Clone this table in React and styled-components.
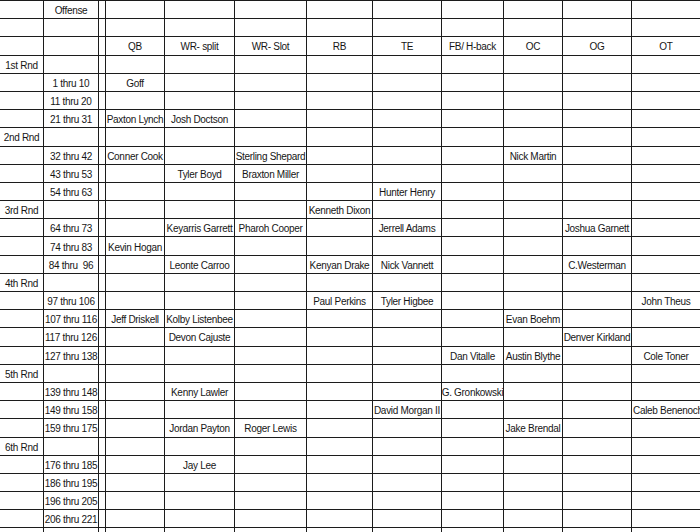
import React from "react";
import styled, { createGlobalStyle } from "styled-components";

const GlobalStyle = createGlobalStyle`
  html, body {
    margin: 0;
    padding: 0;
    background: #ffffff;
    overflow: hidden;
  }
  body {
    font-family: "Liberation Sans", Arial, sans-serif;
  }
`;

const COLUMNS = "44px 55px 7px 59px 70px 72px 66px 69px 62px 59px 69px 68px";

const Sheet = styled.div`
  width: 700px;
  height: 532px;
  overflow: hidden;
  border-top: 1px solid #1c1c1c;
  background: #fff;
`;

const Row = styled.div`
  display: grid;
  grid-template-columns: ${COLUMNS};
  height: 18.2px;
`;

const Cell = styled.div`
  box-sizing: border-box;
  display: flex;
  align-items: center;
  justify-content: ${(p) => (p.$align === "left" ? "flex-start" : "center")};
  padding-top: 2px;
  padding-left: ${(p) => (p.$align === "left" ? "1px" : "0")};
  border-bottom: 1px solid #1c1c1c;
  border-right: ${(p) => (p.$last ? "none" : "1px solid #1c1c1c")};
  font-size: 10px;
  letter-spacing: -0.3px;
  color: #161616;
  white-space: pre;
  overflow: hidden;
`;

// columns: 0 round, 1 pick range, 2 spacer, then positions
const POS = {
  QB: 3,
  WRS: 4,
  WRSL: 5,
  RB: 6,
  TE: 7,
  FB: 8,
  OC: 9,
  OG: 10,
  OT: 11,
};

const rows = [
  { 1: "Offense" },
  {},
  {
    3: "QB",
    4: "WR- split",
    5: "WR- Slot",
    6: "RB",
    7: "TE",
    8: "FB/ H-back",
    9: "OC",
    10: "OG",
    11: "OT",
  },
  { 0: "1st Rnd" },
  { 1: "1 thru 10", [POS.QB]: "Goff" },
  { 1: "11 thru 20" },
  { 1: "21 thru 31", [POS.QB]: "Paxton Lynch", [POS.WRS]: "Josh Doctson" },
  { 0: "2nd Rnd" },
  {
    1: "32 thru 42",
    [POS.QB]: "Conner Cook",
    [POS.WRSL]: "Sterling Shepard",
    [POS.OC]: "Nick Martin",
  },
  { 1: "43 thru 53", [POS.WRS]: "Tyler Boyd", [POS.WRSL]: "Braxton Miller" },
  { 1: "54 thru 63", [POS.TE]: "Hunter Henry" },
  { 0: "3rd Rnd", [POS.RB]: "Kenneth Dixon" },
  {
    1: "64 thru 73",
    [POS.WRS]: "Keyarris Garrett",
    [POS.WRSL]: "Pharoh Cooper",
    [POS.TE]: "Jerrell Adams",
    [POS.OG]: "Joshua Garnett",
  },
  { 1: "74 thru 83", [POS.QB]: "Kevin Hogan" },
  {
    1: "84 thru  96",
    [POS.WRS]: "Leonte Carroo",
    [POS.RB]: "Kenyan Drake",
    [POS.TE]: "Nick Vannett",
    [POS.OG]: "C.Westerman",
  },
  { 0: "4th Rnd" },
  {
    1: "97 thru 106",
    [POS.RB]: "Paul Perkins",
    [POS.TE]: "Tyler Higbee",
    [POS.OT]: "John Theus",
  },
  {
    1: "107 thru 116",
    [POS.QB]: "Jeff Driskell",
    [POS.WRS]: "Kolby Listenbee",
    [POS.OC]: "Evan Boehm",
  },
  { 1: "117 thru 126", [POS.WRS]: "Devon Cajuste", [POS.OG]: "Denver Kirkland" },
  {
    1: "127 thru 138",
    [POS.FB]: "Dan Vitalle",
    [POS.OC]: "Austin Blythe",
    [POS.OT]: "Cole Toner",
  },
  { 0: "5th Rnd" },
  { 1: "139 thru 148", [POS.WRS]: "Kenny Lawler", [POS.FB]: "G. Gronkowski" },
  {
    1: "149 thru 158",
    [POS.TE]: "David Morgan II",
    [POS.OT]: { text: "Caleb Benenoch", align: "left" },
  },
  {
    1: "159 thru 175",
    [POS.WRS]: "Jordan Payton",
    [POS.WRSL]: "Roger Lewis",
    [POS.OC]: "Jake Brendal",
  },
  { 0: "6th Rnd" },
  { 1: "176 thru 185", [POS.WRS]: "Jay Lee" },
  { 1: "186 thru 195" },
  { 1: "196 thru 205" },
  { 1: "206 thru 221" },
  {},
];

const COL_COUNT = 12;

export default function App() {
  return (
    <>
      <GlobalStyle />
      <Sheet>
        {rows.map((row, r) => (
          <Row key={r}>
            {Array.from({ length: COL_COUNT }, (_, c) => {
              const v = row[c];
              const text = typeof v === "object" && v ? v.text : v;
              const align = typeof v === "object" && v ? v.align : "center";
              return (
                <Cell key={c} $align={align} $last={c === COL_COUNT - 1}>
                  {text}
                </Cell>
              );
            })}
          </Row>
        ))}
      </Sheet>
    </>
  );
}
